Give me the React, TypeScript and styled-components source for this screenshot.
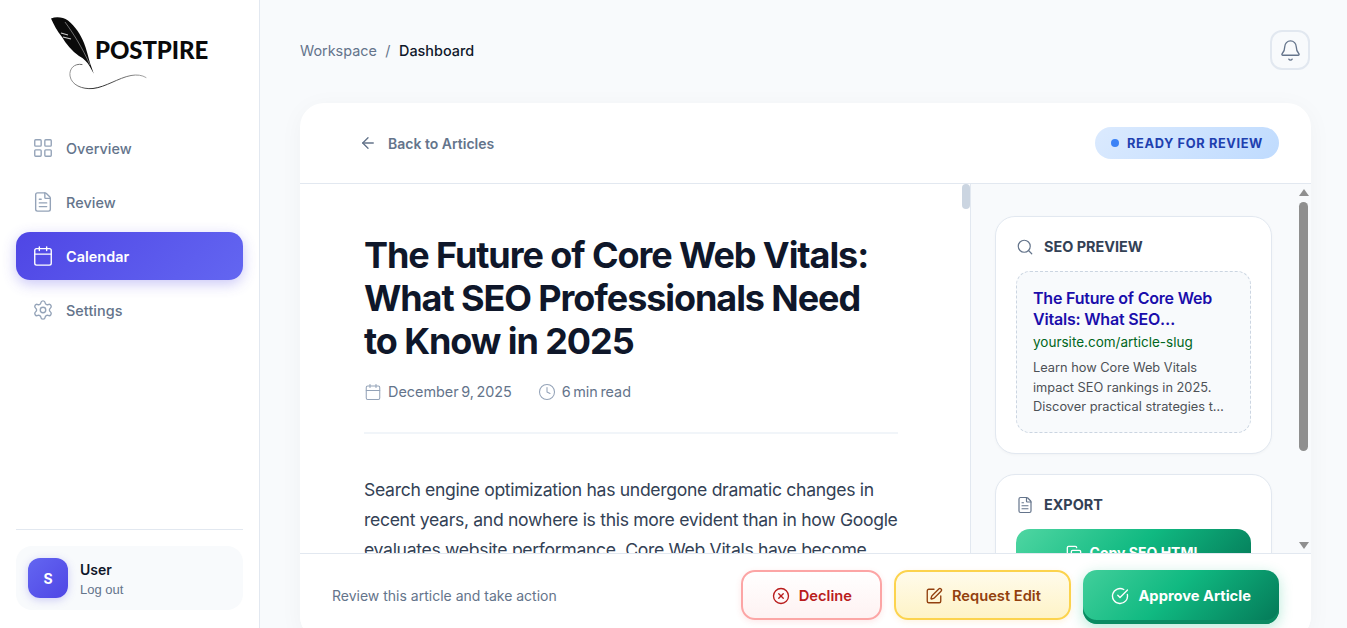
import styled, {createGlobalStyle} from 'styled-components';
import {
  ArrowLeft,
  Bell,
  Calendar,
  CircleCheckBig,
  CircleX,
  Clock,
  Copy,
  FileText,
  LayoutGrid,
  Search,
  Settings,
  SquarePen,
} from 'lucide-react';

const GlobalStyle = createGlobalStyle`
  * { box-sizing: border-box; }
  html, body { margin: 0; height: 100%; overflow: hidden; }
  body {
    font-family: Inter, "Liberation Sans", sans-serif;
    background: #f8fafc;
    color: #0f172a;
  }
`;

const Shell = styled.div`
  display: flex;
  width: 1347px;
  height: 628px;
  overflow: hidden;
`;

const Sidebar = styled.aside`
  width: 260px;
  flex-shrink: 0;
  display: flex;
  flex-direction: column;
  padding: 0 16px 18px;
  background: #fff;
  border-right: 1px solid #e2e8f0;
`;

const LogoWrap = styled.div`
  height: 124px;
  display: flex;
  align-items: flex-start;
  padding: 14px 0 0 32px;
`;

const LogoText = styled.span`
  margin: 21px 0 0 1px;
  font-family: Lato, sans-serif;
  font-weight: 900;
  font-size: 24px;
  line-height: 30px;
  letter-spacing: -0.1px;
  color: #0a0a0a;
`;

const Nav = styled.nav`
  display: flex;
  flex-direction: column;
  gap: 6px;
  flex: 1;
`;

const NavItem = styled.a<{$active?: boolean}>`
  height: 48px;
  display: flex;
  align-items: center;
  gap: 12px;
  padding: 0 16px;
  border-radius: 14px;
  font-size: 14.4px;
  letter-spacing: 0.05px;
  font-weight: ${({$active}) => ($active ? 600 : 500)};
  color: ${({$active}) => ($active ? '#fff' : '#64748b')};
  background: ${({$active}) =>
    $active ? 'linear-gradient(135deg, #4f46e5, #6366f1)' : 'transparent'};
  box-shadow: ${({$active}) =>
    $active ? '0 4px 14px rgba(79, 70, 229, 0.3)' : 'none'};

  svg {
    color: ${({$active}) => ($active ? '#fff' : '#94a3b8')};
    flex-shrink: 0;
  }
`;

const UserArea = styled.div`
  border-top: 1px solid #e2e8f0;
  padding-top: 16px;
`;

const UserCard = styled.div`
  display: flex;
  align-items: center;
  gap: 12px;
  height: 64px;
  padding: 0 12px;
  border-radius: 16px;
  background: #f8fafc;
`;

const Avatar = styled.div`
  width: 40px;
  height: 40px;
  border-radius: 12px;
  display: flex;
  align-items: center;
  justify-content: center;
  color: #fff;
  font-size: 14px;
  font-weight: 700;
  background: linear-gradient(135deg, #6366f1, #4f46e5);
  box-shadow: 0 2px 8px rgba(79, 70, 229, 0.25);
`;

const UserInfo = styled.div`
  padding-top: 3px;
`;

const UserName = styled.div`
  font-size: 14px;
  font-weight: 600;
  line-height: 18px;
  color: #0f172a;
`;

const LogOut = styled.div`
  margin-top: 3px;
  font-family: "Liberation Sans", sans-serif;
  font-size: 13px;
  line-height: 16px;
  color: #64748b;
`;

const Main = styled.main`
  flex: 1;
  min-width: 0;
  padding: 30px 36px 0 40px;
  display: flex;
  flex-direction: column;
`;

const TopBar = styled.div`
  height: 40px;
  margin-bottom: 33px;
  display: flex;
  align-items: center;
  justify-content: space-between;
`;

const Crumbs = styled.div`
  display: flex;
  gap: 8.5px;
  margin-top: 1px;
  font-size: 14.4px;
  color: #64748b;

  strong {
    font-weight: 500;
    color: #0f172a;
  }
`;

const BellButton = styled.button`
  width: 40px;
  height: 40px;
  margin-right: 1px;
  padding: 0;
  display: flex;
  align-items: center;
  justify-content: center;
  color: #64748b;
  background: #f8fafc;
  border: 2px solid #e2e8f0;
  border-radius: 12px;
`;

const Card = styled.section`
  width: 1011px;
  height: 537px;
  flex-shrink: 0;
  display: flex;
  flex-direction: column;
  overflow: hidden;
  background: #fff;
  border-radius: 24px;
  box-shadow: 0 4px 24px rgba(15, 23, 42, 0.04);
`;

const CardHead = styled.header`
  height: 81px;
  flex-shrink: 0;
  display: flex;
  align-items: center;
  justify-content: space-between;
  padding: 0 32px 0 59px;
  border-bottom: 1px solid #e2e8f0;
`;

const BackLink = styled.a`
  display: flex;
  align-items: center;
  gap: 11px;
  font-size: 14px;
  font-weight: 600;
  color: #64748b;
`;

const Badge = styled.div`
  height: 32px;
  display: flex;
  align-items: center;
  gap: 8px;
  padding: 0 16px;
  border-radius: 16px;
  font-size: 12.8px;
  font-weight: 700;
  letter-spacing: 0.62px;
  color: #1e40af;
  background: linear-gradient(135deg, #dbeafe, #bfdbfe);
`;

const Dot = styled.span`
  width: 8px;
  height: 8px;
  border-radius: 50%;
  background: #3b82f6;
`;

const CardBody = styled.div`
  flex: 1;
  min-height: 0;
  display: flex;
`;

const ArticlePane = styled.div`
  flex: 1;
  min-width: 0;
  display: flex;
  overflow: hidden;
`;

const Article = styled.article`
  flex: 1;
  min-width: 0;
  padding: 50px 64px 0;
`;

const ThinScroll = styled.div`
  width: 8px;
  flex-shrink: 0;

  &::before {
    content: '';
    display: block;
    height: 25px;
    border-radius: 4px;
    background: #cbd5e1;
  }
`;

const Title = styled.h1`
  margin: 0 0 20px;
  font-size: 36px;
  line-height: 43px;
  font-weight: 700;
  letter-spacing: -1.08px;
  color: #0f172a;
`;

const Meta = styled.div`
  display: flex;
  gap: 26px;
  padding-bottom: 31px;
  margin-bottom: 41px;
  border-bottom: 2px solid #f1f5f9;
  font-size: 14.4px;
  line-height: 18px;
  word-spacing: -1.5px;
  color: #64748b;
`;

const MetaItem = styled.span`
  display: flex;
  align-items: center;
  gap: 6px;

  svg {
    color: #94a3b8;
  }
`;

const Paragraph = styled.p`
  margin: 0 -6px 0 0;
  font-size: 17.6px;
  line-height: 30px;
  letter-spacing: -0.32px;
  color: #334155;
`;

const SidePane = styled.aside`
  width: 341px;
  flex-shrink: 0;
  display: flex;
  background: #f8fafc;
  border-left: 1px solid #e2e8f0;
  overflow: hidden;
`;

const SideContent = styled.div`
  flex: 1;
  min-width: 0;
  display: flex;
  flex-direction: column;
  gap: 20px;
  padding: 32px 25px 0 24px;
`;

const Panel = styled.div`
  flex-shrink: 0;
  padding: 20px;
  background: #fff;
  border: 1px solid #e2e8f0;
  border-radius: 20px;
  box-shadow: 0 1px 3px rgba(15, 23, 42, 0.03);
`;

const PanelTitle = styled.h3`
  margin: 0 0 14px;
  display: flex;
  align-items: center;
  gap: 10px;
  font-size: 14.4px;
  line-height: 20px;
  font-weight: 700;
  color: #334155;

  svg {
    color: #64748b;
  }
`;

const SerpBox = styled.div`
  padding: 16px 16px 15px;
  background: #f8fafc;
  border: 1px dashed #cbd5e1;
  border-radius: 14px;
`;

const SerpTitle = styled.div`
  display: -webkit-box;
  -webkit-box-orient: vertical;
  -webkit-line-clamp: 2;
  overflow: hidden;
  font-size: 16px;
  line-height: 21px;
  font-weight: 600;
  letter-spacing: -0.2px;
  color: #1a0dab;
`;

const SerpUrl = styled.div`
  margin: 3px 0 7px;
  font-size: 13.5px;
  line-height: 18px;
  color: #006621;
`;

const SerpDesc = styled.div`
  display: -webkit-box;
  -webkit-box-orient: vertical;
  -webkit-line-clamp: 3;
  overflow: hidden;
  padding-right: 6px;
  font-size: 12.8px;
  line-height: 19.5px;
  color: #4d5156;
`;

const CopyButton = styled.button`
  width: 100%;
  height: 48px;
  display: flex;
  align-items: center;
  justify-content: center;
  gap: 8px;
  border: none;
  border-radius: 14px;
  font-family: inherit;
  font-size: 14px;
  font-weight: 700;
  color: #fff;
  background: linear-gradient(135deg, #4fd6a2, #10b981 50%, #047857);
`;

const NativeScroll = styled.div`
  width: 13px;
  margin-right: 1px;
  flex-shrink: 0;
  display: flex;
  flex-direction: column;
  align-items: center;
  padding-top: 5px;
`;

const ScrollArrow = styled.span<{$down?: boolean}>`
  width: 0;
  height: 0;
  border-left: 5px solid transparent;
  border-right: 5px solid transparent;
  ${({$down}) =>
    $down ? 'border-top: 7px solid #8f8f8f;' : 'border-bottom: 7px solid #8f8f8f;'}
`;

const ScrollThumb = styled.span`
  width: 9px;
  height: 249px;
  margin: 6px 0 91px;
  border-radius: 5px;
  background: #8f8f8f;
`;

const ActionBar = styled.footer`
  height: 87px;
  flex-shrink: 0;
  display: flex;
  justify-content: space-between;
  align-items: flex-start;
  padding: 16px 32px 0;
  background: #fff;
  border-top: 1px solid #e2e8f0;
`;

const ActionHint = styled.span`
  margin-top: 17px;
  font-size: 14px;
  line-height: 18px;
  color: #64748b;
`;

const ActionRow = styled.div`
  display: flex;
  gap: 12px;
`;

const ActionButton = styled.button<{$kind: 'decline' | 'edit' | 'approve'}>`
  height: ${({$kind}) => ($kind === 'approve' ? '54px' : '50px')};
  display: flex;
  align-items: center;
  justify-content: center;
  gap: 9px;
  padding: ${({$kind}) => ($kind === 'approve' ? '0 28px 3px' : '2px 28.5px 0')};
  font-family: inherit;
  font-size: 14.7px;
  font-weight: 600;
  border-radius: 14px;
  ${({$kind}) =>
    $kind === 'decline' &&
    `color: #b91c1c;
     background: linear-gradient(180deg, #fff, #fef2f2);
     border: 2px solid #fca5a5;
     box-shadow: 0 2px 6px rgba(239, 68, 68, 0.12);`}
  ${({$kind}) =>
    $kind === 'edit' &&
    `color: #92400e;
     background: linear-gradient(180deg, #fffbeb, #fef3c7);
     border: 2px solid #fcd34d;
     box-shadow: 0 2px 6px rgba(245, 158, 11, 0.12);`}
  ${({$kind}) =>
    $kind === 'approve' &&
    `color: #fff;
     font-weight: 700;
     border: none;
     background: linear-gradient(135deg, #42cf9b, #10b981 45%, #047857);
     box-shadow: inset 0 -4px 0 #0a8a62, 0 4px 14px rgba(16, 185, 129, 0.3);`}
`;

function LogoMark() {
  return (
    <svg width="46" height="80" viewBox="48 14 46 80" style={{overflow: 'visible'}}>
      <defs>
        <linearGradient id="swirl" x1="0" y1="0" x2="1" y2="0">
          <stop offset="0" stopColor="#999" />
          <stop offset="0.35" stopColor="#222" />
          <stop offset="1" stopColor="#aaa" />
        </linearGradient>
      </defs>
      <path
        d="M51 18.5C56 16.5 63 17 68 20.5C75 26 81 35 84 43C86.5 49 88 56 90 63L93.8 73.8L89.5 66C87 62 84 58.5 79 56C72 51 66 44 62 37C57 31 54 25 51 18.5Z"
        fill="#0a0a0a"
      />
      <path d="M65 22C73 33 82 47 90 65" fill="none" stroke="#fff" strokeWidth="0.6" opacity="0.7" />
      <path d="M61 33L68 35M63 37L71 39" stroke="#fff" strokeWidth="1.2" opacity="0.8" />
      <path
        d="M82 64.5C74 63 69 69 70 76C71.5 85 82 89.5 93 88.5C106 87 118 78 131 75.5C137 74.5 142 75 146 77.5"
        fill="none"
        stroke="url(#swirl)"
        strokeWidth="1"
        strokeLinecap="round"
      />
    </svg>
  );
}

const navLinks = [
  {label: 'Overview', icon: LayoutGrid},
  {label: 'Review', icon: FileText},
  {label: 'Calendar', icon: Calendar, active: true},
  {label: 'Settings', icon: Settings},
];

export default function App() {
  return (
    <Shell>
      <GlobalStyle />
      <Sidebar>
        <LogoWrap>
          <LogoMark />
          <LogoText>POSTPIRE</LogoText>
        </LogoWrap>
        <Nav>
          {navLinks.map(({label, icon: Icon, active}) => (
            <NavItem key={label} $active={active}>
              <Icon size={22} strokeWidth={1.5} />
              {label}
            </NavItem>
          ))}
        </Nav>
        <UserArea>
          <UserCard>
            <Avatar>S</Avatar>
            <UserInfo>
              <UserName>User</UserName>
              <LogOut>Log out</LogOut>
            </UserInfo>
          </UserCard>
        </UserArea>
      </Sidebar>

      <Main>
        <TopBar>
          <Crumbs>
            <span>Workspace</span>
            <span>/</span>
            <strong>Dashboard</strong>
          </Crumbs>
          <BellButton>
            <Bell size={23} strokeWidth={1.4} />
          </BellButton>
        </TopBar>

        <Card>
          <CardHead>
            <BackLink>
              <ArrowLeft size={18} strokeWidth={1.8} />
              Back to Articles
            </BackLink>
            <Badge>
              <Dot />
              READY FOR REVIEW
            </Badge>
          </CardHead>

          <CardBody>
            <ArticlePane>
              <Article>
                <Title>The Future of Core Web Vitals: What SEO Professionals Need to Know in 2025</Title>
                <Meta>
                  <MetaItem>
                    <Calendar size={18} strokeWidth={1.4} />
                    December 9, 2025
                  </MetaItem>
                  <MetaItem>
                    <Clock size={18} strokeWidth={1.4} />
                    6 min read
                  </MetaItem>
                </Meta>
                <Paragraph>
                  Search engine optimization has undergone dramatic changes in recent years, and
                  nowhere is this more evident than in how Google evaluates website performance.
                  Core Web Vitals have become
                </Paragraph>
              </Article>
              <ThinScroll />
            </ArticlePane>

            <SidePane>
              <SideContent>
                <Panel>
                  <PanelTitle>
                    <Search size={18} strokeWidth={1.6} />
                    SEO PREVIEW
                  </PanelTitle>
                  <SerpBox>
                    <SerpTitle>
                      The Future of Core Web Vitals: What SEO Professionals Need to Know in 2025
                    </SerpTitle>
                    <SerpUrl>yoursite.com/article-slug</SerpUrl>
                    <SerpDesc>
                      Learn how Core Web Vitals impact SEO rankings in 2025. Discover practical
                      strategies to improve your site performance and stay ahead.
                    </SerpDesc>
                  </SerpBox>
                </Panel>
                <Panel>
                  <PanelTitle>
                    <FileText size={18} strokeWidth={1.6} />
                    EXPORT
                  </PanelTitle>
                  <CopyButton>
                    <Copy size={16} />
                    Copy SEO HTML
                  </CopyButton>
                </Panel>
              </SideContent>
              <NativeScroll>
                <ScrollArrow />
                <ScrollThumb />
                <ScrollArrow $down />
              </NativeScroll>
            </SidePane>
          </CardBody>

          <ActionBar>
            <ActionHint>Review this article and take action</ActionHint>
            <ActionRow>
              <ActionButton $kind="decline">
                <CircleX size={18} strokeWidth={1.8} />
                Decline
              </ActionButton>
              <ActionButton $kind="edit">
                <SquarePen size={18} strokeWidth={1.8} />
                Request Edit
              </ActionButton>
              <ActionButton $kind="approve">
                <CircleCheckBig size={18} strokeWidth={1.8} />
                Approve Article
              </ActionButton>
            </ActionRow>
          </ActionBar>
        </Card>
      </Main>
    </Shell>
  );
}
